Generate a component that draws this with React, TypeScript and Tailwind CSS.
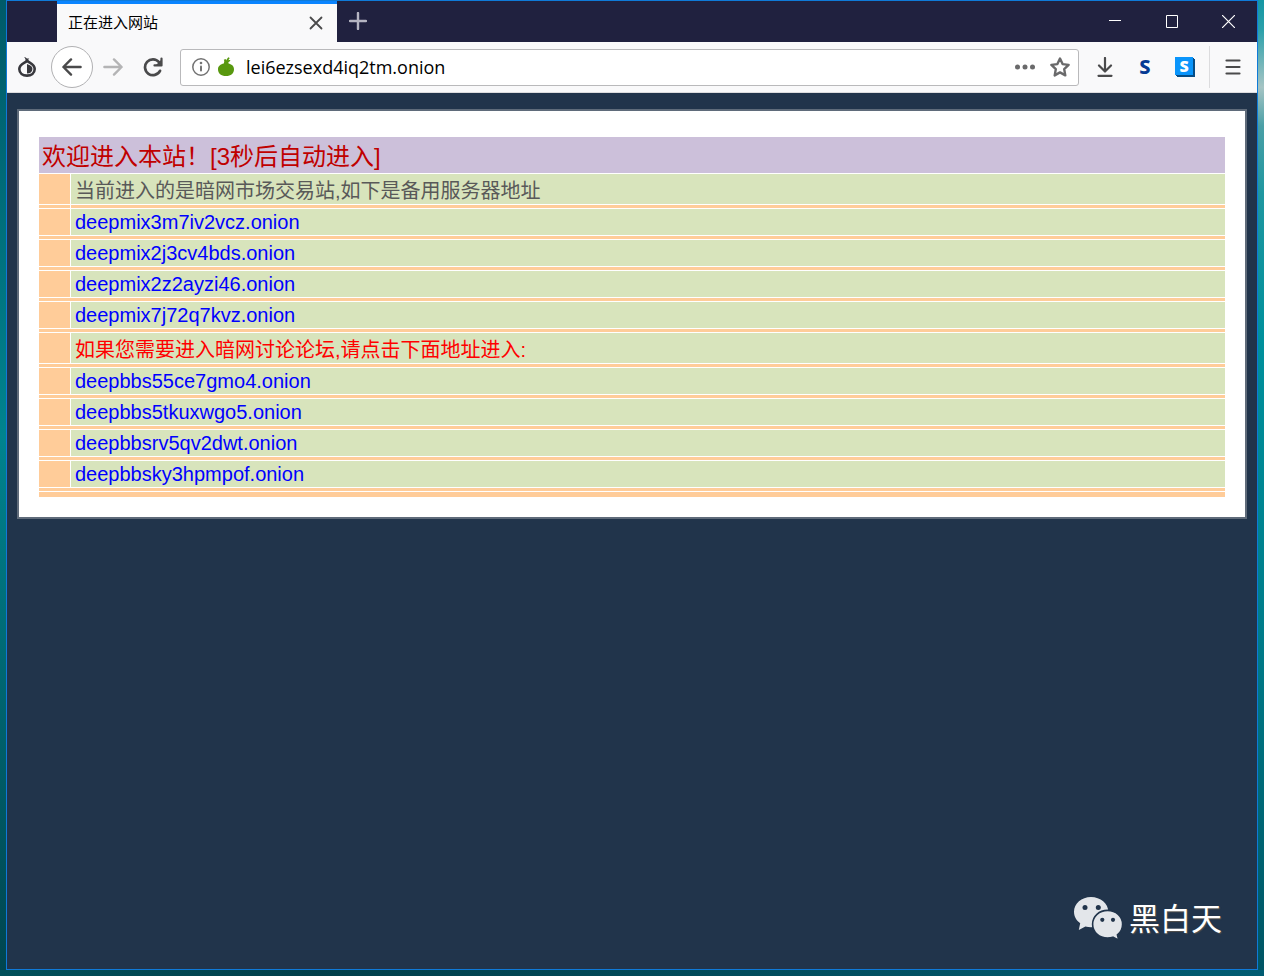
import React, { useState } from "react";

type Row =
  | { kind: "note"; text: string; color: "gray" | "red" }
  | { kind: "link"; host: string };

const rows: Row[] = [
  { kind: "note", text: "当前进入的是暗网市场交易站,如下是备用服务器地址", color: "gray" },
  { kind: "link", host: "deepmix3m7iv2vcz.onion" },
  { kind: "link", host: "deepmix2j3cv4bds.onion" },
  { kind: "link", host: "deepmix2z2ayzi46.onion" },
  { kind: "link", host: "deepmix7j72q7kvz.onion" },
  { kind: "note", text: "如果您需要进入暗网讨论论坛,请点击下面地址进入:", color: "red" },
  { kind: "link", host: "deepbbs55ce7gmo4.onion" },
  { kind: "link", host: "deepbbs5tkuxwgo5.onion" },
  { kind: "link", host: "deepbbsrv5qv2dwt.onion" },
  { kind: "link", host: "deepbbsky3hpmpof.onion" },
];

function TitleBar() {
  return (
    <div className="flex h-[41px] shrink-0 bg-[#20213f]">
      <div className="ml-[50px] flex w-[280px] items-center justify-between border-t-[3px] border-[#0a84ff] bg-[#f9f9fa] pr-3 pl-[11px]">
        <span className="text-[15px] leading-5 text-black">正在进入网站</span>
        <button type="button" aria-label="Close tab" className="flex h-5 w-[18px] items-center justify-center">
          <svg width="14" height="14" viewBox="0 0 14 14" fill="none" stroke="#4a4a4b" strokeWidth="1.8" strokeLinecap="round">
            <path d="M1.5 1.5l11 11M12.5 1.5l-11 11" />
          </svg>
        </button>
      </div>
      <button type="button" aria-label="New tab" className="flex h-10 w-[42px] items-center justify-center">
        <svg width="18" height="18" viewBox="0 0 18 18" fill="none" stroke="#b5b5c2" strokeWidth="2.4" strokeLinecap="round">
          <path d="M9 1v16M1 9h16" />
        </svg>
      </button>
      <div className="ml-auto flex h-10">
        <button type="button" aria-label="Minimize" className="flex w-[57px] items-center justify-center">
          <svg width="12" height="12" viewBox="0 0 12 12" stroke="#fff">
            <path d="M0 5.5h12" />
          </svg>
        </button>
        <button type="button" aria-label="Maximize" className="flex w-[57px] items-center justify-center">
          <svg width="12" height="13" viewBox="0 0 12 13" fill="none" stroke="#fff">
            <path d="M.5.5h11v12H.5z" />
          </svg>
        </button>
        <button type="button" aria-label="Close" className="flex w-[57px] items-center justify-center">
          <svg width="13" height="13" viewBox="0 0 13 13" stroke="#fff" strokeWidth="1.2">
            <path d="M0 0l13 13M13 0L0 13" />
          </svg>
        </button>
      </div>
    </div>
  );
}

function Toolbar() {
  const [url, setUrl] = useState("lei6ezsexd4iq2tm.onion");

  return (
    <div className="flex h-[51px] shrink-0 items-center border-b border-[#dcdcde] bg-[#f9f9fa]">
      <button type="button" aria-label="Tor Button" className="flex w-10 justify-center">
        <svg width="20" height="20" viewBox="0 0 20 20" fill="none">
          <path
            d="M9.6 4.2C7.4 6 2.3 7 2.3 12c0 4.2 3.5 6.6 7.7 6.6s7.7-2.400 7.7-6.600c0-5-5-6-7-7.800z"
            stroke="#38383d"
            strokeWidth="2.6"
          />
          <path d="M7 0c1.400.3 2.200.8 2.900 1.600.8-.3 1.600-.3 2.400 0-1 .7-1.200 1.600-1 3L8.400 4.800C9 3.200 8.400 1.400 7 0z" fill="#38383d" />
          <path d="M10 7v9.400c3.600 0 5.400-1.800 5.400-4.500S13 8.200 10 7z" fill="#38383d" />
        </svg>
      </button>
      <button type="button" aria-label="Back" className="ml-1 flex h-[42px] w-[42px] items-center justify-center rounded-full border border-[#b1b1b3] bg-white">
        <svg width="20" height="18" viewBox="0 0 20 18" fill="none" stroke="#4a4a4b" strokeWidth="2.4" strokeLinecap="round" strokeLinejoin="round">
          <path d="M18.6 9H1.6M9 1.4L1.4 9 9 16.6" />
        </svg>
      </button>
      <button type="button" aria-label="Forward" disabled className="flex w-10 justify-center">
        <svg width="20" height="18" viewBox="0 0 20 18" fill="none" stroke="#b4b4b5" strokeWidth="2.4" strokeLinecap="round" strokeLinejoin="round">
          <path d="M1.4 9h17M11 1.4L18.6 9 11 16.6" />
        </svg>
      </button>
      <button type="button" aria-label="Reload" className="flex w-10 justify-center">
        <svg width="20" height="20" viewBox="0 0 20 20" fill="none">
          <path d="M16 5.2A7.900 7.900 0 1 0 17 13.800" stroke="#4a4a4b" strokeWidth="2.7" strokeLinecap="round" />
          <path d="M18.500 1.600v6.800h-7" stroke="#4a4a4b" strokeWidth="2.2" strokeLinecap="round" strokeLinejoin="round" />
          <path d="M18.500 2.400v6h-6z" fill="#4a4a4b" />
        </svg>
      </button>
      <div className="ml-[7px] flex h-[37px] min-w-0 flex-1 items-center rounded-[3px] border border-[#b9b9bb] bg-white">
        <svg className="ml-[11px]" width="18" height="18" viewBox="0 0 18 18" fill="none">
          <circle cx="9" cy="9" r="8.2" stroke="#737373" strokeWidth="1.5" />
          <rect x="8" y="7.6" width="2" height="6" rx="1" fill="#737373" />
          <circle cx="9" cy="5" r="1.3" fill="#737373" />
        </svg>
        <svg className="ml-2" width="16" height="20" viewBox="0 0 16 20" fill="#58980f">
          <path d="M5.800 6.400C6.400 5 6.400 4 5.800 2.800l1.800-.8.700 1.500C8.600 2.200 9.500 1 10.800.3l.9 1c-.7.700-1.100 1.300-1.300 2 .6-.3 1.200-.4 1.900-.3l-.3 1.200c-1 .4-1.700 1-1.700 2C13.400 7.200 16 8.800 16 12.200c0 4-3 6.800-8 6.800s-8-2.800-8-6.800c0-3.400 2.600-5 5.800-5.800z" />
        </svg>
        <input
          aria-label="Address"
          className="ml-3 min-w-0 flex-1 bg-transparent font-['Open_Sans',sans-serif] text-[18px] leading-6 text-black outline-none"
          value={url}
          onChange={(e) => setUrl(e.target.value)}
        />
        <button type="button" aria-label="Page actions" className="flex w-[35px] justify-center">
          <svg width="20" height="6" viewBox="0 0 20 6" fill="#6a6a6b">
            <circle cx="2.5" cy="3" r="2.5" />
            <circle cx="10" cy="3" r="2.5" />
            <circle cx="17.5" cy="3" r="2.5" />
          </svg>
        </button>
        <button type="button" aria-label="Bookmark" className="flex w-9 justify-center">
          <svg width="20" height="20" viewBox="0 0 20 20" fill="none" stroke="#6a6a6b" strokeWidth="2.4" strokeLinejoin="round">
            <path d="M10 1.6l2.6 5.500 6 .8-4.400 4.200 1.100 6.300L10 15.400l-5.300 3 1.100-6.300L1.400 7.900l6-.8z" />
          </svg>
        </button>
      </div>
      <div className="ml-1.5 flex">
        <button type="button" aria-label="Downloads" className="flex w-10 justify-center">
          <svg width="16" height="20" viewBox="0 0 16 20" fill="none" stroke="#4a4a4b" strokeWidth="2.2" strokeLinecap="round" strokeLinejoin="round">
            <path d="M8 1v13M2 8.5l6 6 6-6M1.5 18.800h13" />
          </svg>
        </button>
        <button type="button" aria-label="NoScript" className="w-10 text-center font-['Noto_Sans',sans-serif] text-xl leading-5 font-extrabold text-[#053a94]">
          S
        </button>
        <button type="button" aria-label="Script options" className="flex w-10 justify-center">
          <span className="mr-0.5 flex h-[18px] w-[18px] items-center justify-center bg-[#0a95fb] font-['Open_Sans',sans-serif] text-base leading-4 font-extrabold text-white shadow-[1px_1px_0_#064d86,2px_2px_0_#064d86]">
            S
          </span>
        </button>
      </div>
      <div className="ml-1 flex h-[42px] w-12 items-center border-l border-[#dcdcde] pl-[15px]">
        <button type="button" aria-label="Open menu">
          <svg width="16" height="16" viewBox="0 0 16 16" stroke="#4a4a4b" strokeWidth="2.2" strokeLinecap="round">
            <path d="M1.5 1.5h13M1.5 8h13M1.5 14.5h13" />
          </svg>
        </button>
      </div>
    </div>
  );
}

function MirrorTable() {
  return (
    <table className="w-full table-fixed border-separate border-spacing-px text-xl">
      <colgroup>
        <col className="w-[31px]" />
        <col />
      </colgroup>
      <thead>
        <tr>
          <th colSpan={2} className="bg-[#ccc0da] p-0 pt-1 pl-[3px] text-left text-2xl leading-8 font-normal text-[#c00000]">
            欢迎进入本站！[3秒后自动进入]
          </th>
        </tr>
      </thead>
      <tbody>
        {rows.map((row, i) => (
          <React.Fragment key={i}>
            <tr>
              <td className="bg-[#ffcc99] p-0" />
              {row.kind === "note" ? (
                <td className={`bg-[#d8e4bc] p-0 pt-1 pl-1 leading-[26px] ${row.color === "red" ? "text-[#ff0000]" : "text-[#595959]"}`}>
                  {row.text}
                </td>
              ) : (
                <td className="bg-[#d8e4bc] p-0 pl-1 leading-[26px]">
                  <a href={`http://${row.host}`} className="block text-[#0000ff]">
                    {row.host}
                  </a>
                </td>
              )}
            </tr>
            {/* the strip under the first row keeps its two cells */}
            {i === 0 ? (
              <tr>
                <td className="h-[3px] bg-[#ffcc99] p-0" />
                <td className="h-[3px] bg-[#ffcc99] p-0" />
              </tr>
            ) : (
              <tr>
                <td colSpan={2} className="h-[3px] bg-[#ffcc99] p-0" />
              </tr>
            )}
          </React.Fragment>
        ))}
        <tr>
          <td colSpan={2} className="h-[5px] bg-[#ffcc99] p-0" />
        </tr>
      </tbody>
    </table>
  );
}

function Watermark() {
  return (
    <div className="absolute right-[35px] bottom-7 flex items-center gap-1.5 text-white">
      <svg width="49" height="44" viewBox="0 0 49 44">
        <path d="M17 0C7.6 0 0 6.4 0 14.800c0 4.800 2.400 8.800 6.200 11.400L4.800 33l6.600-3.600c1.800.5 3.700.8 5.600.8 9.400 0 17.400-6.800 17.400-15.200S26.400 0 17 0z" fill="#e3e6ea" />
        <circle cx="11" cy="10.6" r="2.5" fill="#21344b" />
        <circle cx="24.3" cy="10.6" r="2.5" fill="#21344b" />
        <path d="M33.600 13.400c-8.400 0-15 6-15 13.800S25.200 41 33.600 41c1.900 0 3.700-.3 5.300-.8l5.900 3-1.400-5.400c3.200-2.400 5.200-6.400 5.200-10.600 0-7.800-6.600-13.800-15-13.800z" fill="#e3e6ea" stroke="#21344b" strokeWidth="1.6" />
        <circle cx="28.3" cy="22.8" r="2.1" fill="#21344b" />
        <circle cx="39" cy="22.8" r="2.1" fill="#21344b" />
      </svg>
      <span className="pt-0.5 text-[31px] leading-10 text-shadow-[1px_1px_1px_#55524e]">黑白天</span>
    </div>
  );
}

export default function App() {
  return (
    <div className="flex min-h-screen flex-col font-['Liberation_Sans','Noto_Sans_CJK_SC',sans-serif]">
      <div className="flex flex-1">
        <div className="w-1.5 bg-linear-to-b from-[#005a68] via-[#00838e] via-45% to-[#00454f]" />
        <div className="relative flex min-w-0 flex-1 flex-col border border-[#0f7ad8] bg-[#21344b]">
          <TitleBar />
          <Toolbar />
          <main className="px-2.5 pt-4">
            <div className="border-2 border-[#5f6b7a] bg-white px-[19px] pt-[25px] pb-[19px]">
              <MirrorTable />
            </div>
          </main>
          <Watermark />
        </div>
        <div className="w-1.5 bg-[linear-gradient(#1596a3,#2aa0aa_3%,#a5c4c4_9%,#4a9fa6_13%,#1f97a0_20%,#00909c_35%,#007c8a_65%,#005564)]" />
      </div>
      <div className="h-1.5 bg-linear-to-r from-[#00505a] via-[#003f4a] via-25% to-[#005c72]" />
    </div>
  );
}
